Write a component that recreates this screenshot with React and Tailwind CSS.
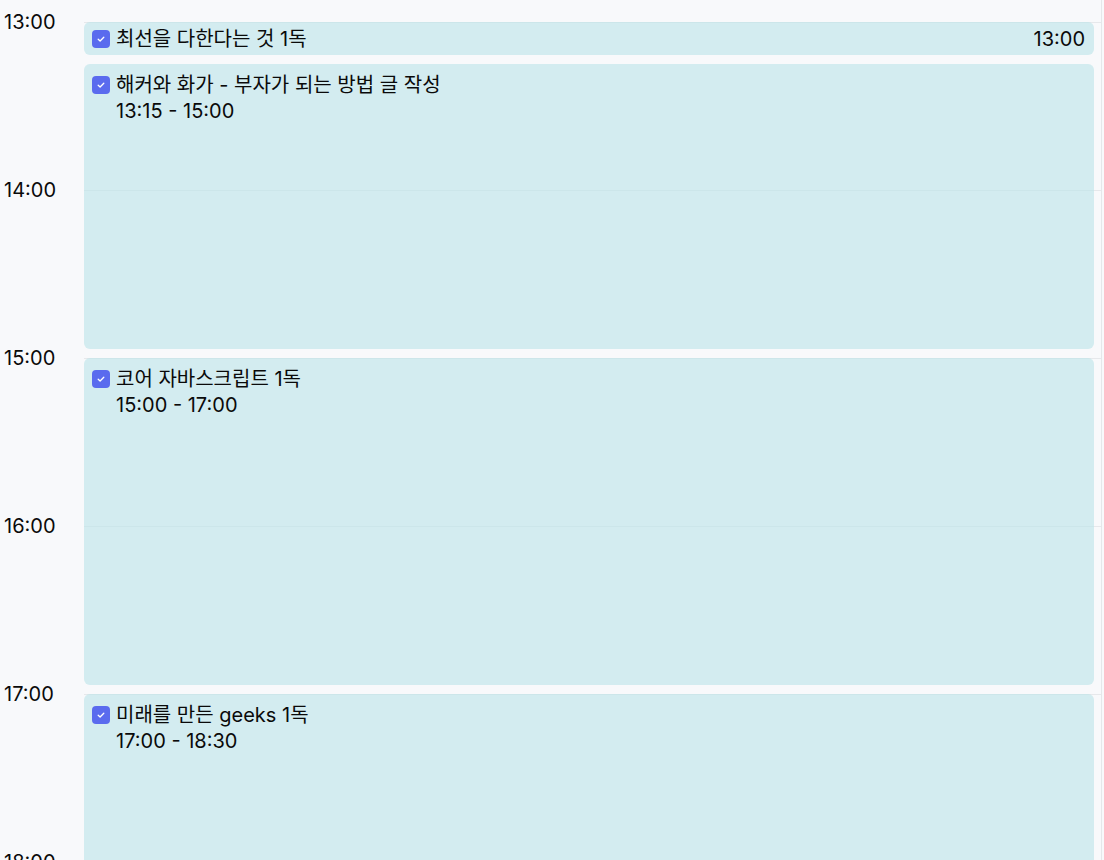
import React from 'react';

const HOUR = 168;
const START = 13;

const hours = [13, 14, 15, 16, 17, 18];

const events = [
  { id: 1, title: '최선을 다한다는 것 1독', start: 13, end: 13.25, compact: true, label: '13:00' },
  { id: 2, title: '해커와 화가 - 부자가 되는 방법 글 작성', start: 13.25, end: 15, label: '13:15 - 15:00' },
  { id: 3, title: '코어 자바스크립트 1독', start: 15, end: 17, label: '15:00 - 17:00' },
  { id: 4, title: '미래를 만든 geeks 1독', start: 17, end: 18.5, label: '17:00 - 18:30' },
];

function CheckBox() {
  return (
    <svg width="18" height="18" viewBox="0 0 18 18" className="flex-shrink-0">
      <rect x="0" y="0" width="18" height="18" rx="4" fill="#5a6bee" />
      <path d="M6.2 9.2 L8.1 11 L11.8 7.2" fill="none" stroke="#fff" strokeWidth="1.3" strokeLinecap="round" strokeLinejoin="round" />
    </svg>
  );
}

function EventCard({ ev }) {
  const top = (ev.start - START) * HOUR;
  const height = (ev.end - ev.start) * HOUR - 9;

  return (
    <div
      className="absolute left-0 right-[7px] rounded-md bg-[rgba(189,228,233,0.63)] text-[20px] leading-[26px] text-[#0a0a0a] overflow-hidden"
      style={{ top, height }}
    >
      {ev.compact ? (
        <div className="h-full flex items-center justify-between pl-2 pr-[9px]">
          <div className="flex items-center gap-[6px]">
            <CheckBox />
            <span>{ev.title}</span>
          </div>
          <span>{ev.label}</span>
        </div>
      ) : (
        <div className="pt-2 pl-2 pr-2">
          <div className="flex items-center gap-[6px]">
            <CheckBox />
            <span>{ev.title}</span>
          </div>
          <div className="pl-6">{ev.label}</div>
        </div>
      )}
    </div>
  );
}

export default function App() {
  return (
    <div
      className="h-[860px] w-[1104px] overflow-hidden bg-[#f8f9fb] text-[#0a0a0a]"
      style={{ fontFamily: 'Inter, "Noto Sans CJK KR", sans-serif' }}
    >
      <div className="flex pt-[22px]">
        {/* time labels */}
        <div className="w-[84px] flex-shrink-0">
          {hours.map((h) => (
            <div key={h} className="h-[168px] relative">
              <span className="absolute left-1 top-0 -translate-y-1/2 text-[20px] leading-[26px]">
                {h}:00
              </span>
            </div>
          ))}
        </div>

        {/* day column */}
        <div className="w-[1018px] relative border-r border-[#e5e7ea] -mt-[22px] pt-[22px]">
          {hours.map((h) => (
            <div key={h} className="h-[168px] border-t border-[#e6e8eb]" />
          ))}
          <div className="absolute left-0 right-0 top-[22px]">
            {events.map((ev) => (
              <EventCard key={ev.id} ev={ev} />
            ))}
          </div>
        </div>
      </div>
    </div>
  );
}
